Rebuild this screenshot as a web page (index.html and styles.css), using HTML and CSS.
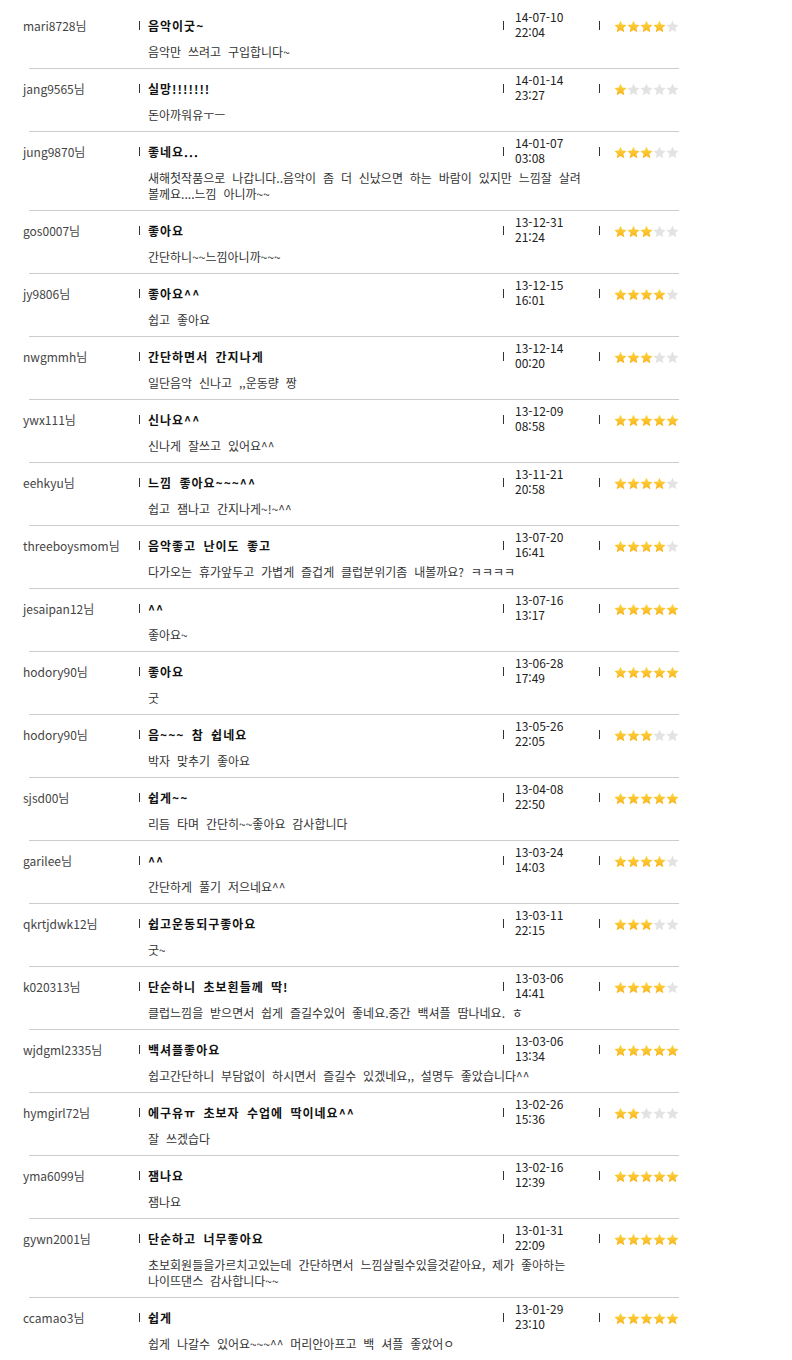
FILE: index.html
```html
<!DOCTYPE html>
<html lang="ko">
<head>
<meta charset="UTF-8" />
<title>상품평</title>
<link rel="stylesheet" href="styles.css">
</head>
<body>
<!-- 상품평 목록 -->
<div class="reviews">

  <div class="review">
    <div class="name">mari8728님</div>
    <div class="title"><span class="bar"></span>음악이굿~</div>
    <div class="date"><span class="bar"></span><span>14-07-10<br>22:04</span></div>
    <div class="rate"><span class="bar"></span><span class="stars"><i class="on"></i><i class="on"></i><i class="on"></i><i class="on"></i><i></i></span></div>
    <div class="text">음악만 쓰려고 구입합니다~</div>
  </div>

  <div class="review">
    <div class="name">jang9565님</div>
    <div class="title"><span class="bar"></span>실망!!!!!!!</div>
    <div class="date"><span class="bar"></span><span>14-01-14<br>23:27</span></div>
    <div class="rate"><span class="bar"></span><span class="stars"><i class="on"></i><i></i><i></i><i></i><i></i></span></div>
    <div class="text">돈아까워유ㅜㅡ</div>
  </div>

  <div class="review">
    <div class="name">jung9870님</div>
    <div class="title"><span class="bar"></span>좋네요...</div>
    <div class="date"><span class="bar"></span><span>14-01-07<br>03:08</span></div>
    <div class="rate"><span class="bar"></span><span class="stars"><i class="on"></i><i class="on"></i><i class="on"></i><i></i><i></i></span></div>
    <div class="text">새해첫작품으로 나갑니다..음악이 좀 더 신났으면 하는 바람이 있지만 느낌잘 살려 볼께요....느낌 아니까~~</div>
  </div>

  <div class="review">
    <div class="name">gos0007님</div>
    <div class="title"><span class="bar"></span>좋아요</div>
    <div class="date"><span class="bar"></span><span>13-12-31<br>21:24</span></div>
    <div class="rate"><span class="bar"></span><span class="stars"><i class="on"></i><i class="on"></i><i class="on"></i><i></i><i></i></span></div>
    <div class="text">간단하니~~느낌아니까~~~</div>
  </div>

  <div class="review">
    <div class="name">jy9806님</div>
    <div class="title"><span class="bar"></span>좋아요^^</div>
    <div class="date"><span class="bar"></span><span>13-12-15<br>16:01</span></div>
    <div class="rate"><span class="bar"></span><span class="stars"><i class="on"></i><i class="on"></i><i class="on"></i><i class="on"></i><i></i></span></div>
    <div class="text">쉽고 좋아요</div>
  </div>

  <div class="review">
    <div class="name">nwgmmh님</div>
    <div class="title"><span class="bar"></span>간단하면서 간지나게</div>
    <div class="date"><span class="bar"></span><span>13-12-14<br>00:20</span></div>
    <div class="rate"><span class="bar"></span><span class="stars"><i class="on"></i><i class="on"></i><i class="on"></i><i></i><i></i></span></div>
    <div class="text">일단음악 신나고 ,,운동량 짱</div>
  </div>

  <div class="review">
    <div class="name">ywx111님</div>
    <div class="title"><span class="bar"></span>신나요^^</div>
    <div class="date"><span class="bar"></span><span>13-12-09<br>08:58</span></div>
    <div class="rate"><span class="bar"></span><span class="stars"><i class="on"></i><i class="on"></i><i class="on"></i><i class="on"></i><i class="on"></i></span></div>
    <div class="text">신나게 잘쓰고 있어요^^</div>
  </div>

  <div class="review">
    <div class="name">eehkyu님</div>
    <div class="title"><span class="bar"></span>느낌 좋아요~~~^^</div>
    <div class="date"><span class="bar"></span><span>13-11-21<br>20:58</span></div>
    <div class="rate"><span class="bar"></span><span class="stars"><i class="on"></i><i class="on"></i><i class="on"></i><i class="on"></i><i></i></span></div>
    <div class="text">쉽고 잼나고 간지나게~!~^^</div>
  </div>

  <div class="review">
    <div class="name">threeboysmom님</div>
    <div class="title"><span class="bar"></span>음악좋고 난이도 좋고</div>
    <div class="date"><span class="bar"></span><span>13-07-20<br>16:41</span></div>
    <div class="rate"><span class="bar"></span><span class="stars"><i class="on"></i><i class="on"></i><i class="on"></i><i class="on"></i><i></i></span></div>
    <div class="text">다가오는 휴가앞두고 가볍게 즐겁게 클럽분위기좀 내볼까요? ㅋㅋㅋㅋ</div>
  </div>

  <div class="review">
    <div class="name">jesaipan12님</div>
    <div class="title"><span class="bar"></span>^^</div>
    <div class="date"><span class="bar"></span><span>13-07-16<br>13:17</span></div>
    <div class="rate"><span class="bar"></span><span class="stars"><i class="on"></i><i class="on"></i><i class="on"></i><i class="on"></i><i class="on"></i></span></div>
    <div class="text">좋아요~</div>
  </div>

  <div class="review">
    <div class="name">hodory90님</div>
    <div class="title"><span class="bar"></span>좋아요</div>
    <div class="date"><span class="bar"></span><span>13-06-28<br>17:49</span></div>
    <div class="rate"><span class="bar"></span><span class="stars"><i class="on"></i><i class="on"></i><i class="on"></i><i class="on"></i><i class="on"></i></span></div>
    <div class="text">굿</div>
  </div>

  <div class="review">
    <div class="name">hodory90님</div>
    <div class="title"><span class="bar"></span>음~~~ 참 쉽네요</div>
    <div class="date"><span class="bar"></span><span>13-05-26<br>22:05</span></div>
    <div class="rate"><span class="bar"></span><span class="stars"><i class="on"></i><i class="on"></i><i class="on"></i><i></i><i></i></span></div>
    <div class="text">박자 맞추기 좋아요</div>
  </div>

  <div class="review">
    <div class="name">sjsd00님</div>
    <div class="title"><span class="bar"></span>쉽게~~</div>
    <div class="date"><span class="bar"></span><span>13-04-08<br>22:50</span></div>
    <div class="rate"><span class="bar"></span><span class="stars"><i class="on"></i><i class="on"></i><i class="on"></i><i class="on"></i><i class="on"></i></span></div>
    <div class="text">리듬 타며 간단히~~좋아요 감사합니다</div>
  </div>

  <div class="review">
    <div class="name">garilee님</div>
    <div class="title"><span class="bar"></span>^^</div>
    <div class="date"><span class="bar"></span><span>13-03-24<br>14:03</span></div>
    <div class="rate"><span class="bar"></span><span class="stars"><i class="on"></i><i class="on"></i><i class="on"></i><i class="on"></i><i></i></span></div>
    <div class="text">간단하게 풀기 저으네요^^</div>
  </div>

  <div class="review">
    <div class="name">qkrtjdwk12님</div>
    <div class="title"><span class="bar"></span>쉽고운동되구좋아요</div>
    <div class="date"><span class="bar"></span><span>13-03-11<br>22:15</span></div>
    <div class="rate"><span class="bar"></span><span class="stars"><i class="on"></i><i class="on"></i><i class="on"></i><i></i><i></i></span></div>
    <div class="text">굿~</div>
  </div>

  <div class="review">
    <div class="name">k020313님</div>
    <div class="title"><span class="bar"></span>단순하니 초보횐들께 딱!</div>
    <div class="date"><span class="bar"></span><span>13-03-06<br>14:41</span></div>
    <div class="rate"><span class="bar"></span><span class="stars"><i class="on"></i><i class="on"></i><i class="on"></i><i class="on"></i><i></i></span></div>
    <div class="text">클럽느낌을 받으면서 쉽게 즐길수있어 좋네요.중간 백셔플 땀나네요. ㅎ</div>
  </div>

  <div class="review">
    <div class="name">wjdgml2335님</div>
    <div class="title"><span class="bar"></span>백셔플좋아요</div>
    <div class="date"><span class="bar"></span><span>13-03-06<br>13:34</span></div>
    <div class="rate"><span class="bar"></span><span class="stars"><i class="on"></i><i class="on"></i><i class="on"></i><i class="on"></i><i class="on"></i></span></div>
    <div class="text">쉽고간단하니 부담없이 하시면서 즐길수 있겠네요,, 설명두 좋았습니다^^</div>
  </div>

  <div class="review">
    <div class="name">hymgirl72님</div>
    <div class="title"><span class="bar"></span>에구유ㅠ 초보자 수업에 딱이네요^^</div>
    <div class="date"><span class="bar"></span><span>13-02-26<br>15:36</span></div>
    <div class="rate"><span class="bar"></span><span class="stars"><i class="on"></i><i class="on"></i><i></i><i></i><i></i></span></div>
    <div class="text">잘 쓰겠습다</div>
  </div>

  <div class="review">
    <div class="name">yma6099님</div>
    <div class="title"><span class="bar"></span>잼나요</div>
    <div class="date"><span class="bar"></span><span>13-02-16<br>12:39</span></div>
    <div class="rate"><span class="bar"></span><span class="stars"><i class="on"></i><i class="on"></i><i class="on"></i><i class="on"></i><i class="on"></i></span></div>
    <div class="text">잼나요</div>
  </div>

  <div class="review">
    <div class="name">gywn2001님</div>
    <div class="title"><span class="bar"></span>단순하고 너무좋아요</div>
    <div class="date"><span class="bar"></span><span>13-01-31<br>22:09</span></div>
    <div class="rate"><span class="bar"></span><span class="stars"><i class="on"></i><i class="on"></i><i class="on"></i><i class="on"></i><i class="on"></i></span></div>
    <div class="text">초보회원들을가르치고있는데 간단하면서 느낌살릴수있을것같아요, 제가 좋아하는 나이뜨댄스 감사합니다~~</div>
  </div>

  <div class="review">
    <div class="name">ccamao3님</div>
    <div class="title"><span class="bar"></span>쉽게</div>
    <div class="date"><span class="bar"></span><span>13-01-29<br>23:10</span></div>
    <div class="rate"><span class="bar"></span><span class="stars"><i class="on"></i><i class="on"></i><i class="on"></i><i class="on"></i><i class="on"></i></span></div>
    <div class="text">쉽게 나갈수 있어요~~~^^ 머리안아프고 백 셔플 좋았어ㅇ</div>
  </div>

</div>
</body>
</html>
```

FILE: styles.css
```css
body {
  margin: 0;
  background: #fff;
  font-family: "Noto Sans CJK KR", "Liberation Sans", sans-serif;
  font-size: 12px;
  color: #333;
}
.reviews {
  width: 650px;
  margin-left: 29px;
  padding-top: 6px;
}
.review {
  display: grid;
  grid-template-columns: 110px 364px 96px 80px;
  border-bottom: 1px solid #ccc;
  padding: 4px 0 8px;
}
.name, .title, .date, .rate {
  display: flex;
  align-items: center;
  height: 30px;
  line-height: 15px;
}
.name {
  margin-left: -6px;
  color: #444;
}
.title {
  font-weight: bold;
  color: #111;
  letter-spacing: 1px;
  word-spacing: 3px;
}
.bar {
  display: inline-block;
  flex: none;
  width: 1px;
  height: 9px;
  background: #333;
}
.title .bar { margin-right: 8px; }
.date .bar { margin-right: 11px; }
.rate .bar { margin-right: 14px; }
.date {
  color: #222;
}
.date span:last-child {
  margin-top: -2px;
}
.stars {
  display: flex;
  margin-top: 4px;
}
.stars i {
  display: block;
  width: 13px;
  height: 13px;
  background: #e3e3e3;
  clip-path: polygon(50% 0%, 63.5% 31.3%, 97.5% 34.5%, 71.9% 57.2%, 79.4% 90.5%, 50% 73%, 20.6% 90.5%, 28.1% 57.2%, 2.5% 34.5%, 36.5% 31.3%);
}
.stars i.on {
  background: linear-gradient(#ffd94a, #f5a90c);
}
.text {
  grid-column: 2 / 4;
  padding-left: 9px;
  margin-top: 4px;
  line-height: 16px;
  color: #333;
  word-spacing: 3.5px;
  word-break: keep-all;
}
```
